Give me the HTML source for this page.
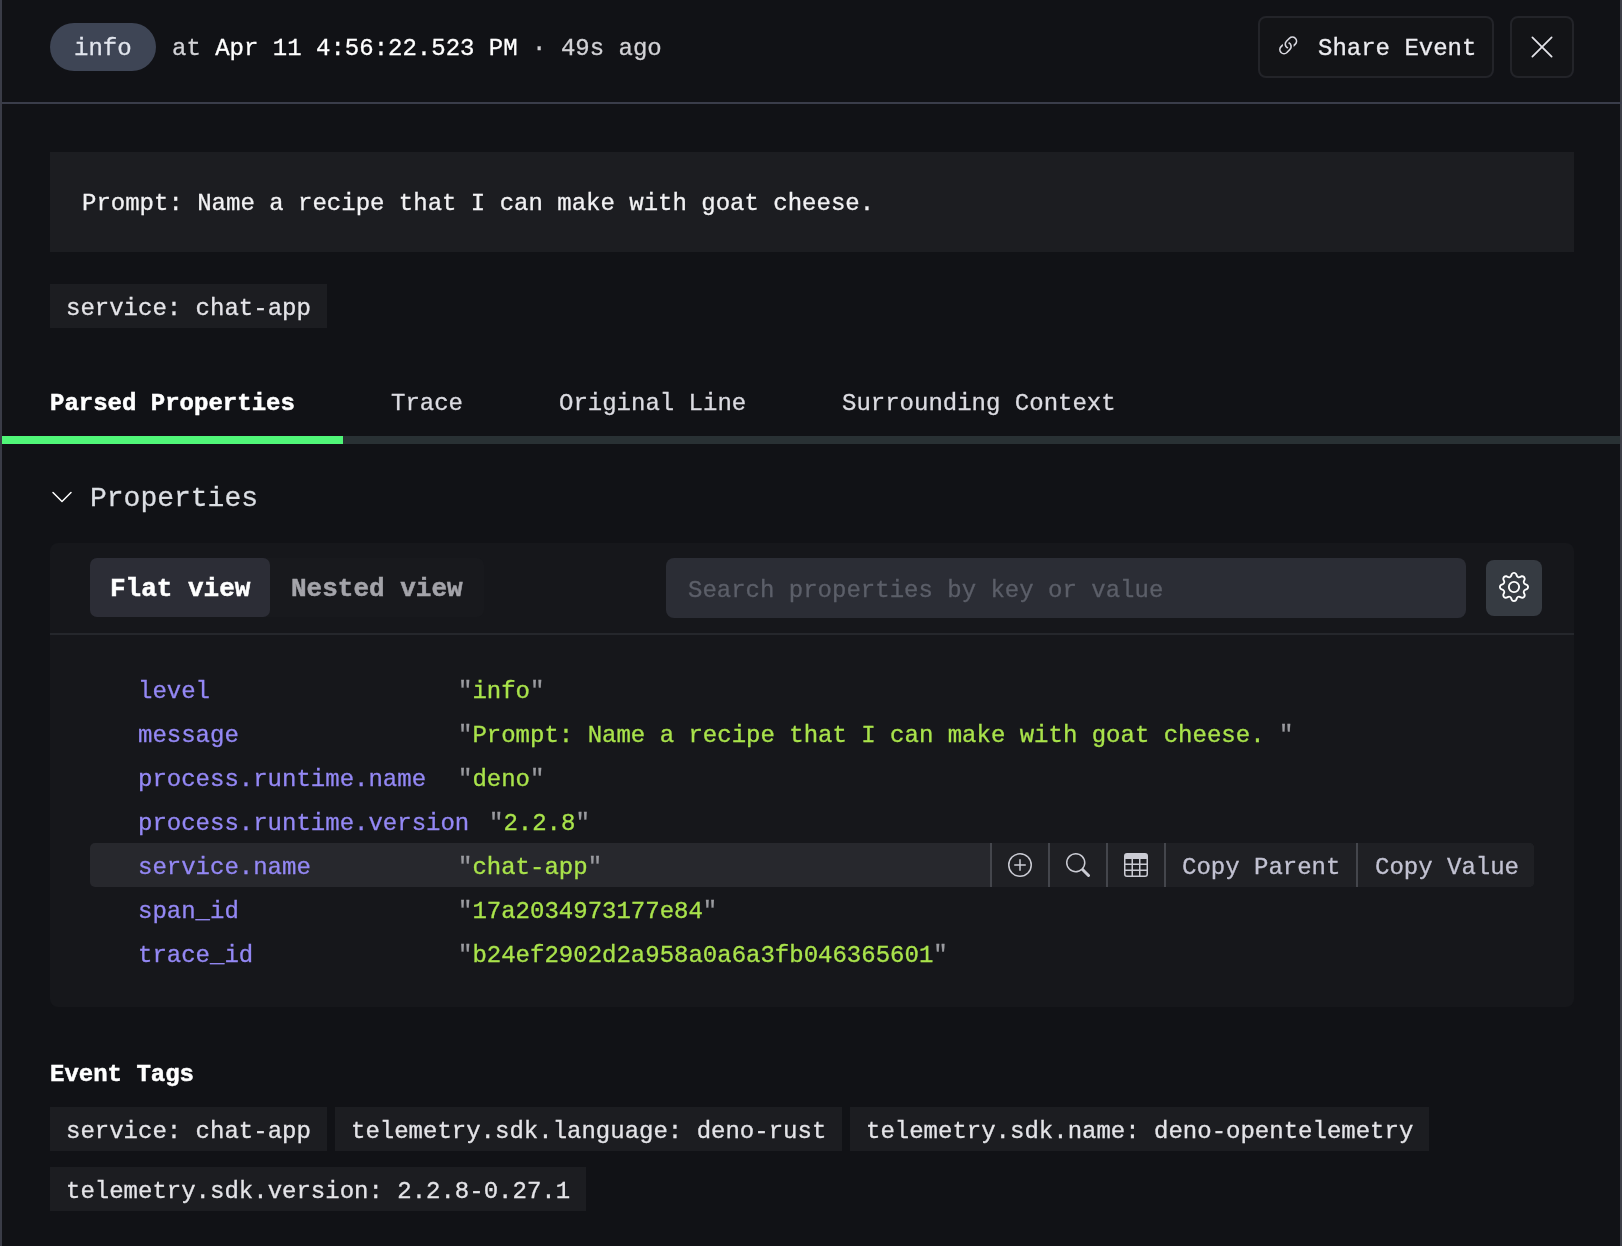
<!DOCTYPE html>
<html lang="en">
<head>
<meta charset="utf-8">
<title>Event details</title>
<style>
*{box-sizing:border-box;margin:0;padding:0}
html,body{width:1622px;height:1246px;overflow:hidden;background:#111216}
body{font-family:"Liberation Mono","DejaVu Sans Mono",monospace;font-size:24px;color:#e6e6ea;position:relative;-webkit-font-smoothing:antialiased}
.abs{position:absolute}
.edge-l{left:0;top:0;width:2px;height:1246px;background:#3a3c47}
.edge-r{left:1620px;top:0;width:2px;height:1246px;background:#3d3f47}
.hdr-line{left:2px;top:102px;width:1620px;height:2px;background:#3a3d4a}
.t{will-change:transform;position:absolute;white-space:pre;line-height:32px;height:32px;margin-top:2px;-webkit-text-stroke:0.3px currentColor}
.b{font-weight:bold;-webkit-text-stroke:0.5px currentColor}
.pill{left:50px;top:23px;width:106px;height:48px;border-radius:24px;background:#3e4555}
.btn{border:2px solid #232429;border-radius:8px;background:#131417}
.box{background:#1c1d21}
svg{position:absolute;display:block}
.k{color:#9488f5}
.v{color:#a9e34b}
.q{color:#9a9ba0}
</style>
</head>
<body>
<div class="abs edge-l"></div>
<div class="abs edge-r"></div>

<!-- header -->
<div class="abs pill"></div>
<div class="t" style="left:74px;top:31px;color:#e2e6ee">info</div>
<div class="t" style="left:172px;top:31px;color:#d2d2d6">at <span style="color:#fff">Apr 11 4:56:22.523 PM</span> · 49s ago</div>
<div class="abs btn" style="left:1258px;top:16px;width:236px;height:62px"></div>
<svg style="left:1275.3px;top:32.8px" width="26.4" height="26.4" viewBox="0 0 16 16" fill="#d8d8e0"><path d="M4.715 6.542 3.343 7.914a3 3 0 1 0 4.243 4.243l1.828-1.829A3 3 0 0 0 8.586 5.5L8 6.086a1.002 1.002 0 0 0-.154.199 2 2 0 0 1 .861 3.337L6.88 11.45a2 2 0 1 1-2.83-2.83l.793-.792a4.018 4.018 0 0 1-.128-1.287z"/><path d="M6.586 4.672A3 3 0 0 0 7.414 9.5l.775-.776a2 2 0 0 1-.896-3.346L9.12 3.55a2 2 0 1 1 2.83 2.83l-.793.792c.112.42.155.855.128 1.287l1.372-1.372a3 3 0 1 0-4.243-4.243L6.586 4.672z"/></svg>
<div class="t" style="left:1318px;top:31px;color:#ececf0">Share Event</div>
<div class="abs btn" style="left:1510px;top:16px;width:64px;height:62px"></div>
<svg style="left:1528px;top:33px" width="28" height="28" viewBox="0 0 16 16" fill="#e4e4ea"><path d="M2.146 2.854a.5.5 0 1 1 .708-.708L8 7.293l5.146-5.147a.5.5 0 0 1 .708.708L8.707 8l5.147 5.146a.5.5 0 0 1-.708.708L8 8.707l-5.146 5.147a.5.5 0 0 1-.708-.708L7.293 8 2.146 2.854Z"/></svg>
<div class="abs hdr-line"></div>

<!-- message -->
<div class="abs box" style="left:50px;top:152px;width:1524px;height:100px"></div>
<div class="t" style="left:82px;top:186px;color:#f2f2f4">Prompt: Name a recipe that I can make with goat cheese.</div>
<div class="abs box" style="left:50px;top:284px;width:277px;height:43.6px"></div>
<div class="t" style="left:66px;top:291px;color:#e4e4e8">service: chat-app</div>

<!-- tabs -->
<div class="t b" style="left:50px;top:386px;color:#fff">Parsed Properties</div>
<div class="t" style="left:391px;top:386px;color:#dcdce2">Trace</div>
<div class="t" style="left:559px;top:386px;color:#dcdce2">Original Line</div>
<div class="t" style="left:842px;top:386px;color:#dcdce2">Surrounding Context</div>
<div class="abs" style="left:2px;top:436px;width:1618px;height:8px;background:#293134"></div>
<div class="abs" style="left:2px;top:436px;width:341px;height:8px;background:#50f678"></div>

<!-- properties heading -->
<svg style="left:50px;top:485px" width="24" height="24" viewBox="0 0 16 16" fill="#fff"><path fill-rule="evenodd" d="M1.646 4.646a.5.5 0 0 1 .708 0L8 10.293l5.646-5.647a.5.5 0 0 1 .708.708l-6 6a.5.5 0 0 1-.708 0l-6-6a.5.5 0 0 1 0-.708z"/></svg>
<div class="t" style="left:90px;top:480px;margin-top:1px;font-size:28px;line-height:36px;height:36px;color:#dcdfe4">Properties</div>

<!-- card -->
<div class="abs" style="left:50px;top:543px;width:1524px;height:464px;border-radius:8px;background:#16171b"></div>
<div class="abs" style="left:90px;top:558px;width:394px;height:59px;border-radius:7px;background:#18191d"></div>
<div class="abs" style="left:90px;top:558px;width:180px;height:59px;border-radius:7px;background:#2c2d36"></div>
<div class="t b" style="left:110px;top:570px;font-size:26px;line-height:34px;height:34px;color:#fff">Flat view</div>
<div class="t b" style="left:291px;top:570px;font-size:26px;line-height:34px;height:34px;color:#a4a4aa">Nested view</div>
<div class="abs" style="left:666px;top:558px;width:800px;height:60px;border-radius:8px;background:#2b2d35"></div>
<div class="t" style="left:688px;top:573px;color:#5c5f69">Search properties by key or value</div>
<div class="abs" style="left:1486px;top:560px;width:56px;height:56px;border-radius:8px;background:#363b42"></div>
<svg style="left:1499px;top:572px" width="30" height="30" viewBox="0 0 16 16" fill="#fff"><path d="M8 4.754a3.246 3.246 0 1 0 0 6.492 3.246 3.246 0 0 0 0-6.492zM5.754 8a2.246 2.246 0 1 1 4.492 0 2.246 2.246 0 0 1-4.492 0z"/><path d="M9.796 1.343c-.527-1.79-3.065-1.79-3.592 0l-.094.319a.873.873 0 0 1-1.255.52l-.292-.16c-1.64-.892-3.433.902-2.54 2.541l.159.292a.873.873 0 0 1-.52 1.255l-.319.094c-1.79.527-1.79 3.065 0 3.592l.319.094a.873.873 0 0 1 .52 1.255l-.16.292c-.892 1.64.901 3.434 2.541 2.54l.292-.159a.873.873 0 0 1 1.255.52l.094.319c.527 1.79 3.065 1.79 3.592 0l.094-.319a.873.873 0 0 1 1.255-.52l.292.16c1.64.893 3.434-.902 2.54-2.541l-.159-.292a.873.873 0 0 1 .52-1.255l.319-.094c1.79-.527 1.79-3.065 0-3.592l-.319-.094a.873.873 0 0 1-.52-1.255l.16-.292c.893-1.64-.902-3.433-2.541-2.54l-.292.159a.873.873 0 0 1-1.255-.52l-.094-.319zm-2.633.283c.246-.835 1.428-.835 1.674 0l.094.319a1.873 1.873 0 0 0 2.693 1.115l.291-.16c.764-.415 1.6.42 1.184 1.185l-.159.292a1.873 1.873 0 0 0 1.116 2.692l.318.094c.835.246.835 1.428 0 1.674l-.319.094a1.873 1.873 0 0 0-1.115 2.693l.16.291c.415.764-.42 1.6-1.185 1.184l-.291-.159a1.873 1.873 0 0 0-2.693 1.116l-.094.318c-.246.835-1.428.835-1.674 0l-.094-.319a1.873 1.873 0 0 0-2.692-1.115l-.292.16c-.764.415-1.6-.42-1.184-1.185l.159-.291A1.873 1.873 0 0 0 1.945 8.93l-.319-.094c-.835-.246-.835-1.428 0-1.674l.319-.094A1.873 1.873 0 0 0 3.06 4.377l-.16-.292c-.415-.764.42-1.6 1.185-1.184l.292.159a1.873 1.873 0 0 0 2.692-1.115l.094-.319z"/></svg>
<div class="abs" style="left:50px;top:633px;width:1524px;height:2px;background:#25272c"></div>

<!-- rows -->
<div class="abs" style="left:90px;top:843px;width:1444px;height:44px;border-radius:5px;background:#27282d"></div>
<div class="abs" style="left:990px;top:843px;width:544px;height:44px;border-radius:0 5px 5px 0;background:#1f2024"></div>
<div class="abs" style="left:990px;top:843px;width:2px;height:44px;background:#44464c"></div>
<div class="abs" style="left:1048px;top:843px;width:2px;height:44px;background:#44464c"></div>
<div class="abs" style="left:1106px;top:843px;width:2px;height:44px;background:#44464c"></div>
<div class="abs" style="left:1164px;top:843px;width:2px;height:44px;background:#44464c"></div>
<div class="abs" style="left:1356px;top:843px;width:2px;height:44px;background:#44464c"></div>
<svg style="left:1007.5px;top:853px" width="24" height="24" viewBox="0 0 16 16" fill="#cbccd4"><path d="M8 15A7 7 0 1 1 8 1a7 7 0 0 1 0 14zm0 1A8 8 0 1 0 8 0a8 8 0 0 0 0 16z"/><path d="M8 4a.5.5 0 0 1 .5.5v3h3a.5.5 0 0 1 0 1h-3v3a.5.5 0 0 1-1 0v-3h-3a.5.5 0 0 1 0-1h3v-3A.5.5 0 0 1 8 4z"/></svg>
<svg style="left:1065.5px;top:853px" width="24" height="24" viewBox="0 0 16 16" fill="#cbccd4"><path d="M11.742 10.344a6.5 6.5 0 1 0-1.397 1.398h-.001c.03.04.062.078.098.115l3.85 3.85a1 1 0 0 0 1.415-1.414l-3.85-3.85a1.007 1.007 0 0 0-.115-.1zM12 6.5a5.5 5.5 0 1 1-11 0 5.5 5.5 0 0 1 11 0z"/></svg>
<svg style="left:1123.5px;top:853px" width="24" height="24" viewBox="0 0 16 16" fill="#cbccd4"><path d="M0 2a2 2 0 0 1 2-2h12a2 2 0 0 1 2 2v12a2 2 0 0 1-2 2H2a2 2 0 0 1-2-2V2zm15 2h-4v3h4V4zm0 4h-4v3h4V8zm0 4h-4v3h3a1 1 0 0 0 1-1v-2zm-5 3v-3H6v3h4zm-5 0v-3H1v2a1 1 0 0 0 1 1h3zm-4-4h4V8H1v3zm0-4h4V4H1v3zm5-3v3h4V4H6zm4 4H6v3h4V8z"/></svg>
<div class="t" style="left:1182px;top:850px;color:#c2c2d2">Copy Parent</div>
<div class="t" style="left:1375px;top:850px;color:#c2c2d2">Copy Value</div>

<div class="t k" style="left:138px;top:674px">level</div>
<div class="t v" style="left:458px;top:674px"><span class="q">"</span>info<span class="q">"</span></div>
<div class="t k" style="left:138px;top:718px">message</div>
<div class="t v" style="left:458px;top:718px"><span class="q">"</span>Prompt: Name a recipe that I can make with goat cheese. <span class="q">"</span></div>
<div class="t k" style="left:138px;top:762px">process.runtime.name</div>
<div class="t v" style="left:458px;top:762px"><span class="q">"</span>deno<span class="q">"</span></div>
<div class="t k" style="left:138px;top:806px">process.runtime.version</div>
<div class="t v" style="left:489px;top:806px"><span class="q">"</span>2.2.8<span class="q">"</span></div>
<div class="t k" style="left:138px;top:850px">service.name</div>
<div class="t v" style="left:458px;top:850px"><span class="q">"</span>chat-app<span class="q">"</span></div>
<div class="t k" style="left:138px;top:894px">span_id</div>
<div class="t v" style="left:458px;top:894px"><span class="q">"</span>17a2034973177e84<span class="q">"</span></div>
<div class="t k" style="left:138px;top:938px">trace_id</div>
<div class="t v" style="left:458px;top:938px"><span class="q">"</span>b24ef2902d2a958a0a6a3fb046365601<span class="q">"</span></div>

<!-- event tags -->
<div class="t b" style="left:50px;top:1057px;color:#fff">Event Tags</div>
<div class="abs box" style="left:50px;top:1107px;width:277px;height:43.5px"></div>
<div class="t" style="left:66px;top:1114px;color:#e4e4e8">service: chat-app</div>
<div class="abs box" style="left:335px;top:1107px;width:507px;height:43.5px"></div>
<div class="t" style="left:351px;top:1114px;color:#e4e4e8">telemetry.sdk.language: deno-rust</div>
<div class="abs box" style="left:850px;top:1107px;width:579px;height:43.5px"></div>
<div class="t" style="left:866px;top:1114px;color:#e4e4e8">telemetry.sdk.name: deno-opentelemetry</div>
<div class="abs box" style="left:50px;top:1166.5px;width:536px;height:44px"></div>
<div class="t" style="left:66px;top:1174px;color:#e4e4e8">telemetry.sdk.version: 2.2.8-0.27.1</div>
</body>
</html>
